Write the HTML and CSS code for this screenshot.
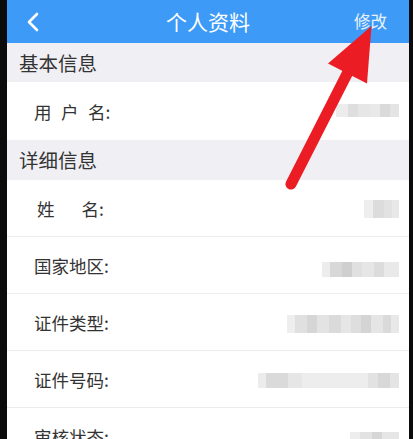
FILE: index.html
```html
<!DOCTYPE html>
<html lang="zh-CN">
<head>
  <meta charset="UTF-8">
  <meta name="viewport" content="width=device-width, initial-scale=1">
  <title>个人资料</title>
  <link rel="stylesheet" href="styles.css">
</head>
<body>
  <div class="phone">
    <header class="nav-bar">
      <svg class="back" width="14" height="20" viewBox="0 0 14 20">
        <polyline points="11,2 3,10 11,18" fill="none" stroke="#fff" stroke-width="2.6" stroke-linecap="round" stroke-linejoin="round"/>
      </svg>
      <h1 class="nav-title">个人资料</h1>
      <span class="nav-action">修改</span>
    </header>

    <div class="section-title section-basic">基本信息</div>
    <div class="row row-first">
      <span class="label"><span class="gap-s">用</span><span class="gap-s">户</span>名:</span>
      <span class="value v-user"></span>
    </div>

    <div class="section-title section-detail">详细信息</div>
    <div class="row">
      <span class="label label-name"><span class="gap-l">姓</span>名:</span>
      <span class="value v-name"></span>
    </div>
    <div class="row">
      <span class="label">国家地区:</span>
      <span class="value v-region"></span>
    </div>
    <div class="row">
      <span class="label">证件类型:</span>
      <span class="value v-idtype"></span>
    </div>
    <div class="row">
      <span class="label">证件号码:</span>
      <span class="value v-idnum"></span>
    </div>
    <div class="row">
      <span class="label">审核状态:</span>
      <span class="value v-status"></span>
    </div>
  </div>

  <!-- annotation arrow drawn over the screenshot -->
  <svg class="arrow" width="413" height="439" viewBox="0 0 413 439">
    <line x1="291" y1="184" x2="349" y2="70" stroke="#ec1c24" stroke-width="11" stroke-linecap="round"/>
    <polygon points="371.5,26 328,63.5 367,83.5" fill="#ec1c24"/>
  </svg>
</body>
</html>
```

FILE: styles.css
```css
*, *::before, *::after { margin: 0; padding: 0; box-sizing: border-box; }
body {
  font-family: "Noto Sans CJK SC", "Noto Sans", sans-serif;
  background: #0b0b0b;
  color: #333;
  width: 413px;
  height: 439px;
  overflow: hidden;
  position: relative;
}
.phone {
  margin-left: 7px;
  width: 402px;
  background: #fff;
}
/* Navigation bar */
.nav-bar {
  height: 43px;
  background: #3d9af6;
  display: flex;
  align-items: center;
  justify-content: space-between;
  padding: 0 22px 0 19px;
  position: relative;
}
.back {
  display: block;
  margin-top: 1px;
}
.nav-title {
  position: absolute;
  left: 0;
  right: 0;
  text-align: center;
  font-size: 21px;
  font-weight: normal;
  color: #fff;
  line-height: 43px;
  pointer-events: none;
}
.nav-action {
  font-size: 16.5px;
  color: #e8f2fd;
  margin-top: -2px;
}
/* Section headers */
.section-title {
  background: #efeff4;
  font-size: 19.5px;
  padding-left: 12px;
  display: flex;
  align-items: center;
  color: #333;
}
.section-basic { height: 39px; }
.section-detail { height: 40px; padding-bottom: 1px; }
/* Rows */
.row {
  height: 57px;
  display: flex;
  align-items: center;
  justify-content: space-between;
  padding: 0 10px 0 27px;
  border-bottom: 1px solid #ececec;
}
.row-first {
  height: 58px;
  border-bottom: none;
}
.label {
  font-size: 17.5px;
  color: #333;
  white-space: nowrap;
}
.gap-s { margin-right: 9.5px; }
.gap-l { margin-right: 27px; }
.label-name { padding-left: 3px; }
/* Blurred values */
.value {
  display: block;
  filter: blur(0.7px);
}
.v-user {
  width: 63px;
  height: 13px;
  margin-top: -1px;
  background: linear-gradient(90deg, #ececec 0 12px, #dedede 12px 22px, #e6e6e6 22px 34px, #e9e9e9 34px 44px, #dadada 44px 54px, #e4e4e4 54px);
}
.v-name {
  width: 35px;
  height: 18px;
  margin-top: 2px;
  background: linear-gradient(90deg, #eeeeee 0 9px, #dcdcdc 9px 20px, #e2e2e2 20px 28px, #e8e8e8 28px);
}
.v-region {
  width: 77px;
  height: 15px;
  margin-top: 8px;
  background: linear-gradient(90deg, #ededed 0 8px, #d8d8d8 8px 20px, #cfcfcf 20px 30px, #e0e0e0 30px 40px, #e6e6e6 40px 52px, #dcdcdc 52px 62px, #e9e9e9 62px);
}
.v-idtype {
  width: 112px;
  height: 18px;
  margin-top: 4px;
  background: linear-gradient(90deg, #eeeeee 0 8px, #e0e0e0 8px 20px, #d6d6d6 20px 30px, #e3e3e3 30px 42px, #dadada 42px 54px, #e6e6e6 54px 64px, #dedede 64px 74px, #d4d4d4 74px 84px, #e5e5e5 84px 96px, #dadada 96px 104px, #e8e8e8 104px);
}
.v-idnum {
  width: 141px;
  height: 15px;
  margin-top: 2px;
  background: linear-gradient(90deg, #ececec 0 8px, #dadada 8px 30px, #e6e6e6 30px 44px, #ededed 44px 110px, #e2e2e2 110px 120px, #d8d8d8 120px 132px, #e4e4e4 132px);
}
.v-status {
  width: 49px;
  height: 16px;
  margin-top: 8px;
  background: linear-gradient(90deg, #ededed 0 10px, #e2e2e2 10px 22px, #d6d6d6 22px 32px, #e6e6e6 32px);
}
/* Overlay annotation */
.arrow {
  position: absolute;
  top: 0;
  left: 0;
  pointer-events: none;
}
```
